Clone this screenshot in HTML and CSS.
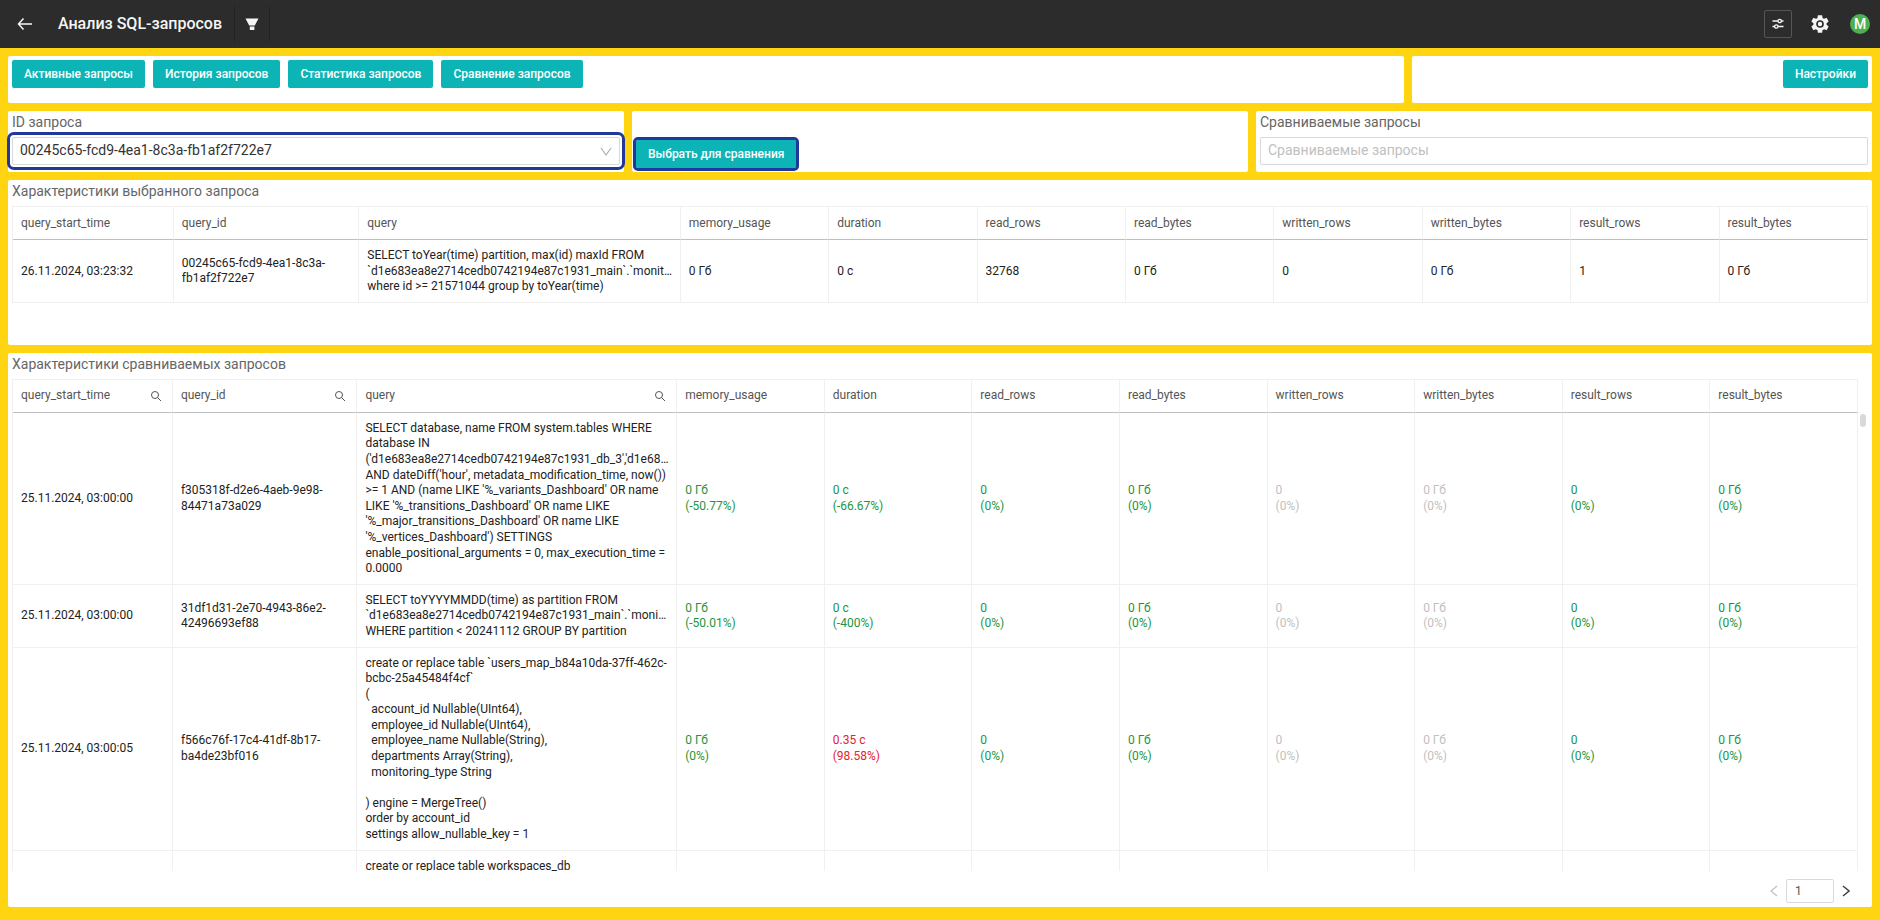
FILE: index.html
```html
<!DOCTYPE html>
<html lang="ru">
<head>
<meta charset="utf-8">
<title>Анализ SQL-запросов</title>
<link rel="stylesheet" href="styles.css">
</head>
<body>
<header class="topbar">
  <button class="icon-btn back" type="button" aria-label="Назад">
    <svg width="16" height="14" viewBox="0 0 16 14" fill="none" stroke="currentColor" stroke-width="1.500"><path d="M6.500 1.500 1.500 7l5 5.500M1.500 7H15"/></svg>
  </button>
  <h1 class="title">Анализ SQL-запросов</h1>
  <button class="icon-btn filter" type="button" aria-label="Фильтр">
    <svg width="14" height="12" viewBox="0 0 14 12" fill="currentColor"><path d="M.5.5h13L9.800 7.500H4.200zM4.800 8.500h4.600V12H4.800z"/></svg>
  </button>
  <div class="tools">
    <button class="icon-btn sliders" type="button" aria-label="Параметры">
      <svg width="12" height="12" viewBox="0 0 12 12" fill="none" stroke="currentColor" stroke-width="1.300"><path d="M.5 3H6M9.500 3h2M.5 8.500h2M6 8.500h5.500"/><circle cx="7.700" cy="3" r="1.700"/><circle cx="4.300" cy="8.500" r="1.700"/></svg>
    </button>
    <button class="icon-btn gear" type="button" aria-label="Настройки системы">
      <svg width="22" height="22" viewBox="0 0 24 24" fill="currentColor"><path d="M19.140 12.940c.04-.3.06-.61.06-.94s-.02-.64-.07-.94l2.030-1.580a.49.49 0 0 0 .12-.61l-1.920-3.320a.49.49 0 0 0-.59-.22l-2.390.96a7 7 0 0 0-1.620-.94l-.36-2.540A.48.48 0 0 0 13.920 2.400h-3.840a.48.48 0 0 0-.47.41l-.36 2.540a7.400 7.400 0 0 0-1.620.94l-2.390-.96a.48.48 0 0 0-.59.22L2.740 8.870a.47.47 0 0 0 .12.61l2.030 1.580a6 6 0 0 0-.09.94c0 .31.02.64.07.94l-2.030 1.580a.49.49 0 0 0-.12.61l1.920 3.320c.12.22.37.29.59.22l2.390-.96c.5.38 1.030.7 1.620.94l.36 2.540c.05.24.24.41.48.41h3.840c.24 0 .44-.17.47-.41l.36-2.540a7 7 0 0 0 1.620-.94l2.390.96c.22.08.47 0 .59-.22l1.920-3.320a.47.47 0 0 0-.12-.61z"/><circle cx="12" cy="12" r="3.300" fill="none" stroke="#2c2c2c" stroke-width="1.800"/></svg>
    </button>
    <button class="avatar" type="button" aria-label="Профиль">M</button>
  </div>
</header>

<main class="board">
  <div class="row row-nav">
    <nav class="panel nav">
      <button class="btn" type="button">Активные запросы</button>
      <button class="btn" type="button">История запросов</button>
      <button class="btn" type="button">Статистика запросов</button>
      <button class="btn" type="button">Сравнение запросов</button>
    </nav>
    <div class="panel nav nav-end">
      <button class="btn" type="button">Настройки</button>
    </div>
  </div>

  <div class="row row-filters">
    <div class="panel">
      <label class="label" for="query-id">ID запроса</label>
      <div class="select">
        <select class="field field-marked" id="query-id">
          <option>00245c65-fcd9-4ea1-8c3a-fb1af2f722e7</option>
        </select>
        <svg class="chevron" width="12" height="9" viewBox="0 0 12 9" fill="none" stroke="currentColor" stroke-width="1.200"><path d="M1 1l5 7 5-7"/></svg>
      </div>
    </div>
    <div class="panel action">
      <button class="btn btn-marked" type="button">Выбрать для сравнения</button>
    </div>
    <div class="panel">
      <label class="label" for="compared">Сравниваемые запросы</label>
      <input class="field" id="compared" type="text" placeholder="Сравниваемые запросы">
    </div>
  </div>

  <section class="panel selected">
    <h2 class="label">Характеристики выбранного запроса</h2>
    <table class="grid">
      <colgroup><col class="c-time"><col class="c-id"><col class="c-query"><col span="8"></colgroup>
      <thead>
        <tr><th>query_start_time</th><th>query_id</th><th>query</th><th>memory_usage</th><th>duration</th><th>read_rows</th><th>read_bytes</th><th>written_rows</th><th>written_bytes</th><th>result_rows</th><th>result_bytes</th></tr>
      </thead>
      <tbody>
        <tr>
          <td>26.11.2024, 03:23:32</td>
          <td>00245c65-fcd9-4ea1-8c3a-fb1af2f722e7</td>
          <td><div class="sql">SELECT toYear(time) partition, max(id) maxId FROM `d1e683ea8e2714cedb0742194e87c1931_main`.`monit… where id &gt;= 21571044 group by toYear(time)</div></td>
          <td>0 Гб</td><td>0 с</td><td>32768</td><td>0 Гб</td><td>0</td><td>0 Гб</td><td>1</td><td>0 Гб</td>
        </tr>
      </tbody>
    </table>
  </section>

  <section class="panel compared">
    <h2 class="label">Характеристики сравниваемых запросов</h2>
    <div class="scroller">
      <table class="grid">
        <colgroup><col class="c-time"><col class="c-id"><col class="c-query"><col span="8"></colgroup>
        <thead>
          <tr>
            <th><div class="th-search">query_start_time<button class="search" type="button" aria-label="Поиск по query_start_time"><svg width="12" height="12" viewBox="0 0 12 12" fill="none" stroke="currentColor"><circle cx="5" cy="5" r="3.500"/><path d="M7.500 7.500 11 11"/></svg></button></div></th>
            <th><div class="th-search">query_id<button class="search" type="button" aria-label="Поиск по query_id"><svg width="12" height="12" viewBox="0 0 12 12" fill="none" stroke="currentColor"><circle cx="5" cy="5" r="3.500"/><path d="M7.500 7.500 11 11"/></svg></button></div></th>
            <th><div class="th-search">query<button class="search" type="button" aria-label="Поиск по query"><svg width="12" height="12" viewBox="0 0 12 12" fill="none" stroke="currentColor"><circle cx="5" cy="5" r="3.500"/><path d="M7.500 7.500 11 11"/></svg></button></div></th>
            <th>memory_usage</th><th>duration</th><th>read_rows</th><th>read_bytes</th><th>written_rows</th><th>written_bytes</th><th>result_rows</th><th>result_bytes</th>
          </tr>
        </thead>
        <tbody>
          <tr>
            <td>25.11.2024, 03:00:00</td>
            <td>f305318f-d2e6-4aeb-9e98-84471a73a029</td>
            <td><div class="sql">SELECT database, name FROM system.tables WHERE database IN ('d1e683ea8e2714cedb0742194e87c1931_db_3','d1e68… AND dateDiff('hour', metadata_modification_time, now()) &gt;= 1 AND (name LIKE '%_variants_Dashboard' OR name LIKE '%_transitions_Dashboard' OR name LIKE '%_major_transitions_Dashboard' OR name LIKE '%_vertices_Dashboard') SETTINGS enable_positional_arguments = 0, max_execution_time = 0.0000</div></td>
            <td class="good">0 Гб<br>(-50.77%)</td><td class="good">0 с<br>(-66.67%)</td><td class="good">0<br>(0%)</td><td class="good">0 Гб<br>(0%)</td><td class="none">0<br>(0%)</td><td class="none">0 Гб<br>(0%)</td><td class="good">0<br>(0%)</td><td class="good">0 Гб<br>(0%)</td>
          </tr>
          <tr>
            <td>25.11.2024, 03:00:00</td>
            <td>31df1d31-2e70-4943-86e2-42496693ef88</td>
            <td><div class="sql">SELECT toYYYYMMDD(time) as partition FROM `d1e683ea8e2714cedb0742194e87c1931_main`.`moni… WHERE partition &lt; 20241112 GROUP BY partition</div></td>
            <td class="good">0 Гб<br>(-50.01%)</td><td class="good">0 с<br>(-400%)</td><td class="good">0<br>(0%)</td><td class="good">0 Гб<br>(0%)</td><td class="none">0<br>(0%)</td><td class="none">0 Гб<br>(0%)</td><td class="good">0<br>(0%)</td><td class="good">0 Гб<br>(0%)</td>
          </tr>
          <tr>
            <td>25.11.2024, 03:00:05</td>
            <td>f566c76f-17c4-41df-8b17-ba4de23bf016</td>
            <td><div class="sql">create or replace table `users_map_b84a10da-37ff-462c-bcbc-25a45484f4cf`
(
  account_id Nullable(UInt64),
  employee_id Nullable(UInt64),
  employee_name Nullable(String),
  departments Array(String),
  monitoring_type String

) engine = MergeTree()
order by account_id
settings allow_nullable_key = 1</div></td>
            <td class="good">0 Гб<br>(0%)</td><td class="bad">0.35 с<br>(98.58%)</td><td class="good">0<br>(0%)</td><td class="good">0 Гб<br>(0%)</td><td class="none">0<br>(0%)</td><td class="none">0 Гб<br>(0%)</td><td class="good">0<br>(0%)</td><td class="good">0 Гб<br>(0%)</td>
          </tr>
          <tr>
            <td></td><td></td>
            <td><div class="sql">create or replace table workspaces_db</div></td>
            <td></td><td></td><td></td><td></td><td></td><td></td><td></td><td></td>
          </tr>
        </tbody>
      </table>
      <div class="track"><div class="thumb"></div></div>
    </div>
    <div class="pager">
      <button class="page-btn" type="button" aria-label="Предыдущая страница" disabled><svg width="8" height="12" viewBox="0 0 8 12" fill="none" stroke="currentColor" stroke-width="1.200"><path d="M7 1 1 6l6 5"/></svg></button>
      <input class="page-input" type="text" value="1" aria-label="Страница">
      <button class="page-btn" type="button" aria-label="Следующая страница"><svg width="8" height="12" viewBox="0 0 8 12" fill="none" stroke="currentColor" stroke-width="1.500"><path d="m1 1 6 5-6 5"/></svg></button>
    </div>
  </section>
</main>
</body>
</html>
```

FILE: styles.css
```css
* { box-sizing: border-box; }

body {
  margin: 0;
  min-height: 100vh;
  display: flex;
  flex-direction: column;
  background: #ffd511;
  color: #222;
  font: 12px/1.3 Roboto, "Liberation Sans", sans-serif;
}

button, input, select { font: inherit; margin: 0; }

/* Top bar */
.topbar {
  display: flex;
  align-items: center;
  height: 48px;
  padding: 0 10px 0 13px;
  background: #2c2c2c;
  color: #f5f5f5;
}

.icon-btn {
  display: flex;
  align-items: center;
  justify-content: center;
  padding: 0;
  border: 0;
  background: none;
  color: inherit;
}

.back { width: 24px; height: 24px; }

.title {
  margin: 0 12px 0 21px;
  font-size: 16px;
  font-weight: 500;
  line-height: 24px;
}

.filter {
  width: 36px;
  height: 36px;
  border: solid #222;
  border-width: 0 1px;
}

.tools {
  display: flex;
  align-items: center;
  gap: 16px;
  margin-left: auto;
}

.sliders {
  width: 28px;
  height: 28px;
  border: 1px solid #555;
  border-radius: 2px;
}

.gear { width: 24px; height: 24px; }

.avatar {
  width: 20px;
  height: 20px;
  margin-left: 2px;
  padding: 0;
  border: 0;
  border-radius: 50%;
  background: #4caf50;
  color: #fff;
  font-size: 14px;
  font-weight: 500;
  line-height: 20px;
}

/* Board */
.board {
  flex: 1;
  display: flex;
  flex-direction: column;
  gap: 8px;
  padding: 8px 8px 13px;
}

.row { display: grid; gap: 8px; }
.row-nav { grid-template-columns: 1396fr 460fr; }
.row-filters { grid-template-columns: repeat(3, 1fr); }

.panel {
  min-width: 0;
  padding: 0 4px;
  border-radius: 2px;
  background: #fff;
}

.nav {
  display: flex;
  align-items: flex-start;
  gap: 8px;
  padding: 4px 4px 15px;
}

.nav-end { justify-content: flex-end; }

.btn {
  height: 28px;
  padding: 2px 12px 0;
  border: 0;
  border-radius: 2px;
  background: #0db4b5;
  color: #fff;
  font-weight: 500;
  white-space: nowrap;
}

.action {
  display: flex;
  align-items: flex-end;
}

.btn-marked {
  border-radius: 2px;
  outline: 3px solid #1f3899;
}

.label {
  display: block;
  margin: 0;
  padding-bottom: 4px;
  color: #666;
  font-size: 14px;
  font-weight: 400;
  line-height: 22px;
}

.field {
  display: block;
  width: 100%;
  height: 28px;
  padding: 0 7px 2px;
  border: 1px solid #d9d9d9;
  border-radius: 2px;
  background: #fff;
  color: #333;
  font-size: 14px;
  appearance: none;
}

.field::placeholder { color: #bfbfbf; }

.row-filters .panel { padding-bottom: 7px; }
.row-filters .action { padding-bottom: 4px; }

.select { position: relative; }

.field-marked {
  outline: 3px solid #1f3899;
  outline-offset: 2px;
}

.chevron {
  position: absolute;
  top: 10px;
  right: 8px;
  color: #b0b0b0;
  pointer-events: none;
}

/* Tables */
.selected { padding-bottom: 42px; }

.grid {
  width: 100%;
  table-layout: fixed;
  border-collapse: separate;
  border-spacing: 0;
  border: solid #f0f0f0;
  border-width: 1px 0 0 1px;
}

.c-time { width: 8.667%; }
.c-id { width: 10%; }
.c-query { width: 17.333%; }

.grid th,
.grid td {
  padding: 8px 8px 7px;
  border: solid #f0f0f0;
  border-width: 0 1px 1px 0;
  text-align: left;
  vertical-align: middle;
}

.grid th {
  height: 33px;
  padding: 1px 8px 0;
  border-bottom-color: #bfbfbf;
  color: #555;
  font-weight: 400;
}

.sql { white-space: pre-wrap; }

.th-search {
  display: flex;
  align-items: center;
  justify-content: space-between;
}

.search {
  display: flex;
  padding: 0 2px 0 0;
  border: 0;
  background: none;
  color: #555;
}

.good { color: #1a9641; }
.bad { color: #e8212e; }
.none { color: #bfbfbf; }

.compared {
  flex: 1;
  display: flex;
  flex-direction: column;
}

.scroller {
  flex: 1 1 0;
  min-height: 0;
  display: flex;
  align-items: flex-start;
  overflow: hidden;
}

.scroller .grid { flex: 1; }

.track {
  width: 10px;
  padding: 35px 2px 0;
}

.thumb {
  height: 13px;
  border-radius: 3px;
  background: #d9d9d9;
}

.pager {
  display: flex;
  justify-content: flex-end;
  padding: 8px 10px 4px 0;
}

.page-btn {
  display: flex;
  align-items: center;
  justify-content: center;
  width: 24px;
  height: 24px;
  padding: 0;
  border: 0;
  background: none;
  color: #444;
}

.page-btn:disabled { color: #bfbfbf; }

.page-input {
  width: 48px;
  height: 24px;
  padding: 0 8px;
  border: 1px solid #d9d9d9;
  border-radius: 2px;
  color: #555;
}
```
